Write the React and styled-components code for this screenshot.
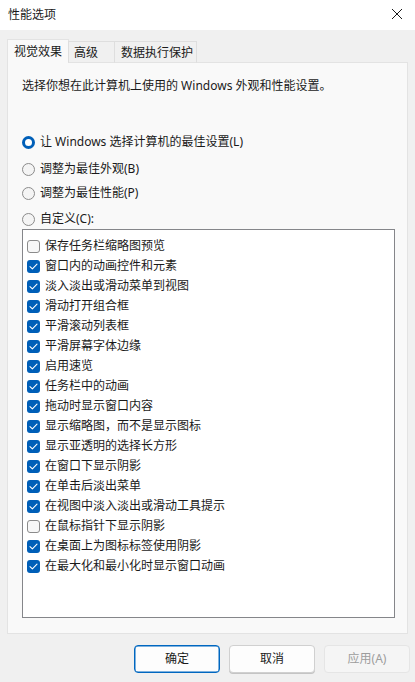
import React from "react";
import styled, { createGlobalStyle } from "styled-components";

const Global = createGlobalStyle`
  html, body { margin: 0; padding: 0; background: #f0f0f0; }
  body {
    font-family: "Noto Sans", "Noto Sans CJK SC", sans-serif;
    font-size: 12px;
    color: #1a1a1a;
  }
  * { box-sizing: border-box; }
`;

const Window = styled.div`
  width: 415px;
  height: 682px;
  display: flex;
  flex-direction: column;
  background: #f0f0f0;
  overflow: hidden;
`;

const TitleBar = styled.div`
  height: 30px;
  flex: 0 0 30px;
  background: #ffffff;
  display: flex;
  align-items: center;
  justify-content: space-between;
  padding: 0 6px 0 8px;
  font-size: 12px;
  line-height: 16px;
`;

const CloseBtn = styled.div`
  width: 24px;
  height: 24px;
  display: flex;
  align-items: center;
  justify-content: center;
  margin-top: -2px;
`;

const Body = styled.div`
  flex: 1;
  display: flex;
  flex-direction: column;
  padding: 10px 7px 0 7px;
`;

const TabRow = styled.div`
  display: flex;
  align-items: flex-end;
  height: 23px;
  position: relative;
  z-index: 1;
  margin-bottom: -1px;
`;

const Tab = styled.div`
  width: ${(p) => p.$w}px;
  height: ${(p) => (p.$active ? 24 : 22)}px;
  padding-left: ${(p) => p.$pl}px;
  background: ${(p) => (p.$active ? "#f9f9f9" : "#f0f0f0")};
  border: 1px solid ${(p) => (p.$active ? "#e3e3e3" : "#dedede")};
  border-bottom: ${(p) => (p.$active ? "none" : "1px solid #e3e3e3")};
  margin-left: ${(p) => (p.$active ? 0 : -1)}px;
  display: flex;
  align-items: center;
  font-size: 12px;
  line-height: 16px;
  padding-top: ${(p) => (p.$active ? 0 : 1)}px;
`;

const Panel = styled.div`
  height: 572px;
  background: #f9f9f9;
  border: 1px solid #e3e3e3;
  padding: 15px 14px 0 14px;
  display: flex;
  flex-direction: column;
`;

const Description = styled.div`
  line-height: 16px;
  font-size: 12px;
`;

const RadioGroup = styled.div`
  display: flex;
  flex-direction: column;
  margin-top: 38px;
`;

const RadioRow = styled.div`
  display: flex;
  align-items: center;
  height: 20px;
  margin-top: ${(p) => p.$mt}px;
  font-size: 12px;
  line-height: 16px;
`;

const RadioCircle = styled.span`
  width: 13px;
  height: 13px;
  border-radius: 50%;
  flex: 0 0 13px;
  margin-right: 5px;
  background: ${(p) => (p.$on ? "#ffffff" : "#f4f4f4")};
  border: ${(p) => (p.$on ? "3.5px solid #005fb8" : "1px solid #8b8b8b")};
`;

const ListBox = styled.div`
  margin-top: 0;
  height: 389px;
  width: 373px;
  background: #ffffff;
  border: 1px solid #85868a;
  padding: 6px 4px;
  display: flex;
  flex-direction: column;
`;

const CheckRow = styled.div`
  display: flex;
  align-items: center;
  height: 20px;
  font-size: 12px;
  line-height: 16px;
`;

const CheckBox = styled.span`
  width: 13px;
  height: 13px;
  flex: 0 0 13px;
  border-radius: 3px;
  margin-right: 5px;
  display: flex;
  align-items: center;
  justify-content: center;
  background: ${(p) => (p.$on ? "#005fb8" : "#f7f7f7")};
  border: ${(p) => (p.$on ? "none" : "1px solid #8b8b8b")};
`;

const ButtonRow = styled.div`
  display: flex;
  justify-content: flex-end;
  gap: 9px;
  margin-top: 11px;
  margin-right: -2px;
`;

const Button = styled.div`
  width: 86px;
  height: 28px;
  border-radius: 4px;
  display: flex;
  align-items: center;
  justify-content: center;
  font-size: 12px;
  line-height: 16px;
  background: ${(p) => (p.$disabled ? "#f5f5f5" : "#fdfdfd")};
  color: ${(p) => (p.$disabled ? "#9d9d9d" : "#1a1a1a")};
  border: 1px solid
    ${(p) => (p.$primary ? "#0067c0" : p.$disabled ? "#e5e5e5" : "#d0d0d0")};
  box-shadow: ${(p) =>
    p.$primary ? "inset 0 0 0 0.5px #0067c0" : p.$disabled ? "none" : "0 1px 0 #c4c4c4"};
`;

const Check = () => (
  <svg width="9" height="7" viewBox="0 0 9 7">
    <polyline
      points="1,3.6 3.4,5.8 8,1.2"
      fill="none"
      stroke="#ffffff"
      strokeWidth="1.1"
      strokeLinecap="round"
      strokeLinejoin="round"
    />
  </svg>
);

const items = [
  ["保存任务栏缩略图预览", false],
  ["窗口内的动画控件和元素", true],
  ["淡入淡出或滑动菜单到视图", true],
  ["滑动打开组合框", true],
  ["平滑滚动列表框", true],
  ["平滑屏幕字体边缘", true],
  ["启用速览", true],
  ["任务栏中的动画", true],
  ["拖动时显示窗口内容", true],
  ["显示缩略图，而不是显示图标", true],
  ["显示亚透明的选择长方形", true],
  ["在窗口下显示阴影", true],
  ["在单击后淡出菜单", true],
  ["在视图中淡入淡出或滑动工具提示", true],
  ["在鼠标指针下显示阴影", false],
  ["在桌面上为图标标签使用阴影", true],
  ["在最大化和最小化时显示窗口动画", true],
];

const radios = [
  ["让 Windows 选择计算机的最佳设置(L)", true, 0],
  ["调整为最佳外观(B)", false, 7],
  ["调整为最佳性能(P)", false, 4],
  ["自定义(C):", false, 6],
];

export default function App() {
  return (
    <Window>
      <Global />
      <TitleBar>
        <span>性能选项</span>
        <CloseBtn>
          <svg width="12" height="12" viewBox="0 0 12 12">
            <path d="M1 1 L11 11 M11 1 L1 11" stroke="#1a1a1a" strokeWidth="1" />
          </svg>
        </CloseBtn>
      </TitleBar>
      <Body>
        <TabRow>
          <Tab $active $w={62} $pl={6}>视觉效果</Tab>
          <Tab $w={47} $pl={5}>高级</Tab>
          <Tab $w={83} $pl={6}>数据执行保护</Tab>
        </TabRow>
        <Panel>
          <Description>选择你想在此计算机上使用的 Windows 外观和性能设置。</Description>
          <RadioGroup>
            {radios.map(([label, on, mt]) => (
              <RadioRow key={label} $mt={mt}>
                <RadioCircle $on={on} />
                {label}
              </RadioRow>
            ))}
          </RadioGroup>
          <ListBox>
            {items.map(([label, on]) => (
              <CheckRow key={label}>
                <CheckBox $on={on}>{on && <Check />}</CheckBox>
                {label}
              </CheckRow>
            ))}
          </ListBox>
        </Panel>
        <ButtonRow>
          <Button $primary>确定</Button>
          <Button>取消</Button>
          <Button $disabled>应用(A)</Button>
        </ButtonRow>
      </Body>
    </Window>
  );
}
